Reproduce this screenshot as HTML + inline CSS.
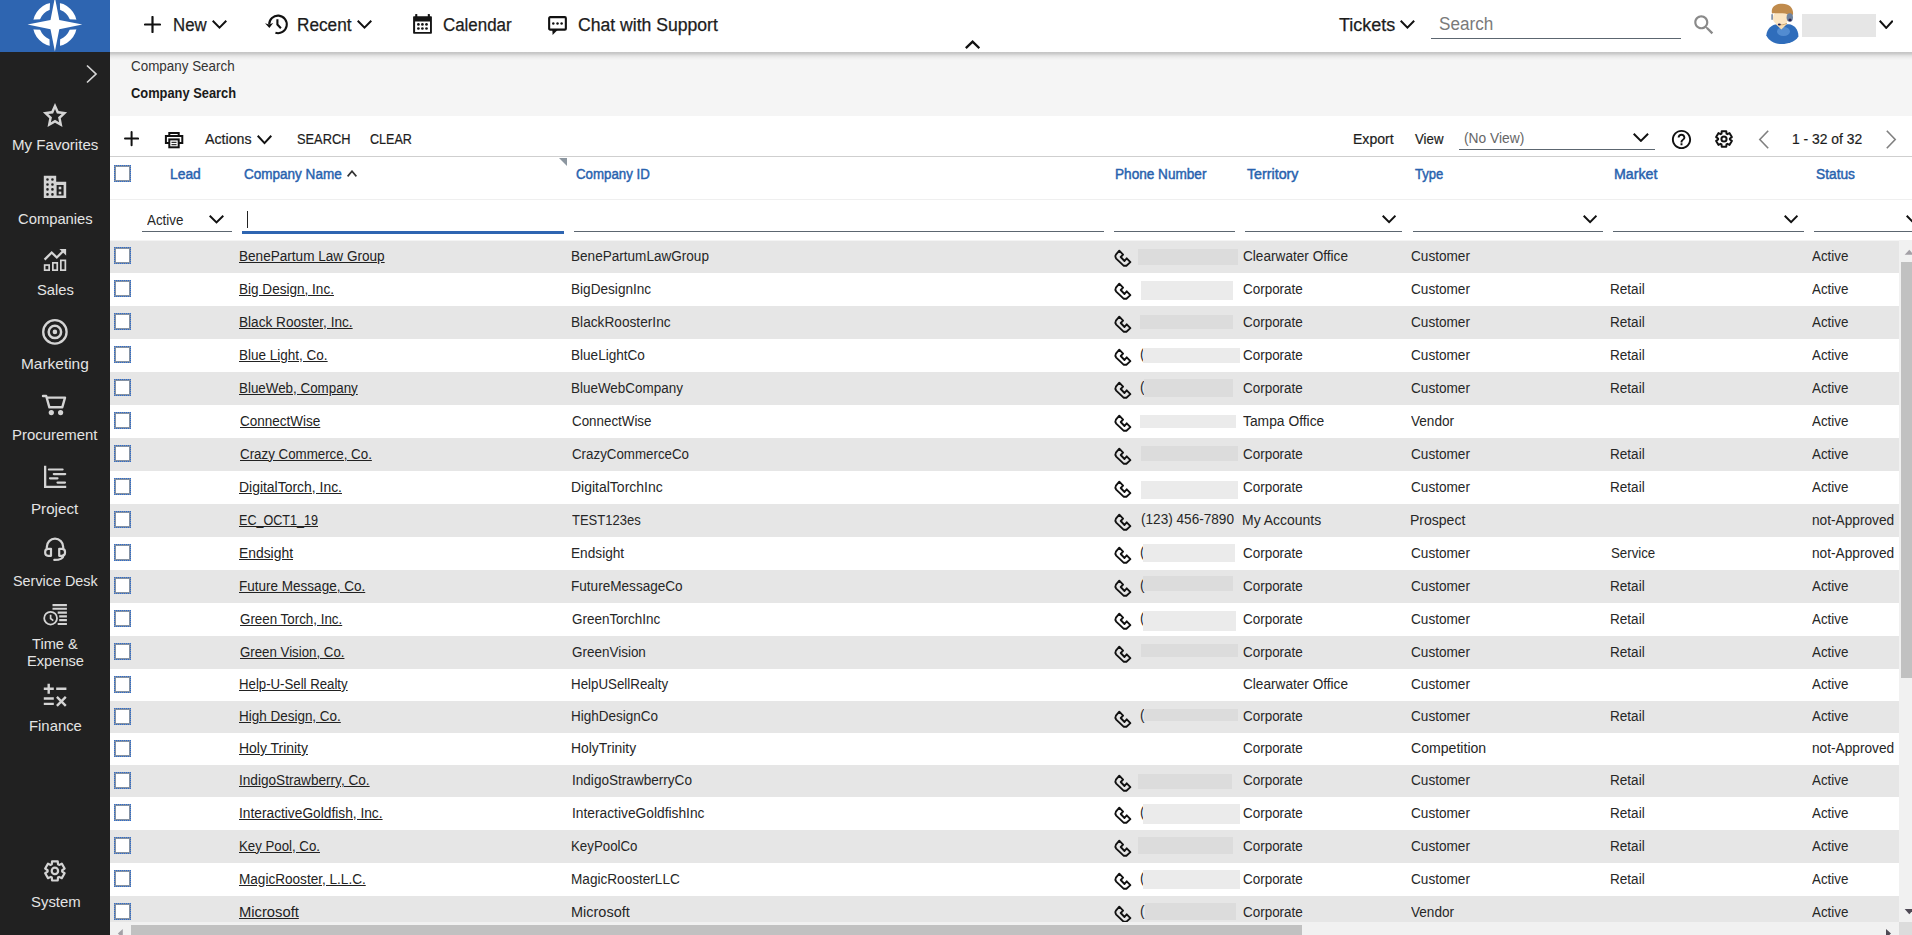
<!DOCTYPE html>
<html lang="en"><head><meta charset="utf-8"><title>Company Search</title>
<style>
*{box-sizing:border-box}
html,body{margin:0;padding:0}
body{width:1912px;height:935px;overflow:hidden;position:relative;background:#fff;font-family:"Liberation Sans",Arial,sans-serif;color:#1a1a1a;font-size:14px}
svg{display:block}
#side{position:absolute;left:0;top:0;width:110px;height:935px;background:#212121}
#logo{position:absolute;left:0;top:0;width:110px;height:52px;background:#2e65b1}
.nav{position:absolute;white-space:nowrap;color:#e4e4e4;font-size:15px;line-height:18px;transform-origin:0 50%}
.ni{position:absolute;left:41px;width:28px;height:28px}
#top{position:absolute;left:110px;top:0;width:1802px;height:52px;background:#fff;z-index:3}
#shad{position:absolute;left:110px;top:52px;width:1802px;height:8px;background:linear-gradient(rgba(0,0,0,.2),rgba(0,0,0,.17) 22%,rgba(0,0,0,.09) 42%,rgba(0,0,0,.04) 65%,rgba(0,0,0,0));z-index:3}
.tn{position:absolute;top:14px;font-size:18px;line-height:22px;color:#1c1c1c;white-space:nowrap;transform-origin:0 50%;-webkit-text-stroke:.25px #1c1c1c}
.ab{position:absolute}
#crumb{position:absolute;left:110px;top:52px;width:1802px;height:64px;background:#f5f5f5}
#crumb div{position:absolute;white-space:nowrap;line-height:18px;font-size:14px;transform-origin:0 50%}
#tb{position:absolute;left:110px;top:116px;width:1802px;height:40px;background:#fff}
.tt{position:absolute;top:14px;line-height:18px;font-size:14px;white-space:nowrap;transform-origin:0 50%;color:#1c1c1c;-webkit-text-stroke:.2px #1c1c1c}
#grid{position:absolute;left:110px;top:0;width:1802px;height:922px;overflow:hidden}
.hl{position:absolute;left:0;width:1802px;height:1px}
.th{position:absolute;top:165px;line-height:18px;font-size:14px;color:#2862ae;white-space:nowrap;transform-origin:0 50%;-webkit-text-stroke:.45px #2862ae}
.fu{position:absolute;top:231px;height:1px;background:#5c6670}
.fc{position:absolute;top:211px}
.row{position:absolute;left:0;width:1789px;background:#fff}
.row.g{background:#e6e6e6}
.c{position:absolute;top:50%;margin-top:-10px;line-height:18px;font-size:14px;white-space:nowrap;color:#262626;transform-origin:0 50%}
a.c{text-decoration:underline;color:#222}
.cb{position:absolute;left:4px;width:17px;height:17px;border:2px solid #8592a3;background:#fff;border-radius:1px}
.cb::after{content:"";box-sizing:border-box;position:absolute;left:-2px;top:-2px;width:17px;height:17px;border:1px dotted #2a6bd0;border-radius:1px}
.row .cb{top:7px}
.phw{position:absolute;left:1000px;top:50%;margin-top:-11.5px}
.rd{position:absolute;background:#ebebeb;display:block}
.row.g .rd{background:#dcdcdc}
</style></head><body>

<div id="side">
 <div id="logo">
  <svg class="ab" style="left:0;top:0" width="110" height="52" viewBox="0 0 110 52">
   <circle cx="54.900" cy="24.550" r="18.800" fill="none" stroke="#fff" stroke-width="6.400"/>
   <path d="M50.200 0 L49.700 52 H60.100 L59.600 0Z M30 19.850 L30 29.250 H80 V19.850Z" fill="#2e65b1"/><path d="M50.200 0 L48.900 24.500 L50.200 52 H59.600 L60.900 24.500 L59.600 0Z M30 20 L54 18.600 L80 20 V29.100 L54 30.500 L30 29.100Z" fill="#2e65b1"/>
   <path d="M54.900 -2.500 L59.300 19.900 L82.300 24.550 L59.300 29.200 L54.900 51.500 L50.500 29.200 L27.500 24.550 L50.500 19.900Z" fill="#fff"/>
  </svg>
 </div>
 <svg class="ab" style="left:79px;top:62px" width="24" height="24" viewBox="0 0 24 24"><path d="M8 3.500 L17 12 L8 20.500" fill="none" stroke="#d6d6d6" stroke-width="1.700"/></svg>
 <svg class="ni" style="top:101px" viewBox="-2 -2 28 28"><g transform="translate(12 13.28) scale(1 1.052)"><path d="M0.00 -12.72 L3.59 -4.94 L12.10 -3.93 L5.80 1.89 L7.48 10.29 L0.00 6.10 L-7.48 10.29 L-5.80 1.89 L-12.10 -3.93 L-3.59 -4.94Z M0.00 -7.00 L1.88 -2.59 L6.66 -2.16 L3.04 0.99 L4.11 5.66 L0.00 3.20 L-4.11 5.66 L-3.04 0.99 L-6.66 -2.16 L-1.88 -2.59Z" fill="#d4d4d4" fill-rule="evenodd"/></g></svg>
<svg class="ni" style="top:173px" viewBox="-2 -2 28 28"><path d="M0.800 0.800 H13.200 V6.800 H23.200 V23 H0.800Z M3.2 4.5a1.3 1.3 0 1 0 2.6 0a1.3 1.3 0 1 0 -2.6 0ZM3.2 9.45a1.3 1.3 0 1 0 2.6 0a1.3 1.3 0 1 0 -2.6 0ZM3.2 14.4a1.3 1.3 0 1 0 2.6 0a1.3 1.3 0 1 0 -2.6 0ZM3.2 19.4a1.3 1.3 0 1 0 2.6 0a1.3 1.3 0 1 0 -2.6 0ZM8.149999999999999 4.5a1.3 1.3 0 1 0 2.6 0a1.3 1.3 0 1 0 -2.6 0ZM8.149999999999999 9.45a1.3 1.3 0 1 0 2.6 0a1.3 1.3 0 1 0 -2.6 0ZM8.149999999999999 14.4a1.3 1.3 0 1 0 2.6 0a1.3 1.3 0 1 0 -2.6 0ZM8.149999999999999 19.4a1.3 1.3 0 1 0 2.6 0a1.3 1.3 0 1 0 -2.6 0Z M13.600 10.100 H20.600 V20.600 H13.600Z" fill="#d4d4d4" fill-rule="evenodd"/><rect x="15.700" y="11.700" width="2.600" height="2.600" fill="#d4d4d4"/><rect x="15.700" y="16.600" width="2.600" height="2.600" fill="#d4d4d4"/></svg>
<svg class="ni" style="top:246px" viewBox="-2 -2 28 28"><g fill="none" stroke="#d4d4d4" stroke-width="1.700"><rect x="1.650" y="17.050" width="4.500" height="5.100"/><rect x="9.850" y="14.850" width="4.400" height="7.300"/><rect x="17.850" y="12.350" width="4.500" height="9.800"/><path d="M1.600 11.600 L8.700 4.500 L13.800 9.500 L20.500 2.800" stroke-width="2.300"/></g><path d="M16.400 0.900 H23.100 V7.600Z" fill="#d4d4d4"/></svg>
<svg class="ni" style="top:318px" viewBox="-2 -2 28 28"><g fill="none" stroke="#d4d4d4"><circle cx="11.900" cy="11.900" r="11.700" stroke-width="2.300"/><circle cx="11.900" cy="11.900" r="6.200" stroke-width="2.500"/></g><circle cx="11.900" cy="11.900" r="2.300" fill="#d4d4d4"/></svg>
<svg class="ni" style="top:391px" viewBox="-2 -2 28 28"><g fill="none" stroke="#d4d4d4" stroke-width="2.400" stroke-linejoin="round" stroke-linecap="round"><path d="M0 3 H3.200 L6.400 14.300 H19.300 L22 4.600 H4.200"/></g><circle cx="8.300" cy="19.600" r="2.600" fill="#d4d4d4"/><circle cx="17.600" cy="19.600" r="2.600" fill="#d4d4d4"/></svg>
<svg class="ni" style="top:463px" viewBox="-2 -2 28 28"><g fill="none" stroke="#d4d4d4" stroke-width="2.300"><path d="M2.150 0.800 V21.950 H23.200"/><path d="M5.900 4.500 H19.600 M10.800 9.100 H22.200 M7 13.300 H14.500 M14.500 17.600 H22" stroke-linecap="round" stroke-width="2.200"/></g></svg>
<svg class="ni" style="top:535px" viewBox="-2 -2 28 28"><g fill="none" stroke="#d4d4d4" stroke-width="2.200"><path d="M3.800 11.500 V9.900 a8.200 8.200 0 0 1 16.400 0 V11.500"/><path d="M8 11.800 H5.200 a3 3 0 0 0 -3 3 v1 a3 3 0 0 0 3 3 H8Z" stroke-linejoin="round"/><path d="M16.200 11.800 H19 a3 3 0 0 1 3 3 v1 a3 3 0 0 1 -3 3 H16.200Z" stroke-linejoin="round"/><path d="M20.500 18.200 C20.300 21.500 17.500 22.900 11.300 22.900" stroke-linecap="round"/></g></svg>
<svg class="ni" style="top:602px" viewBox="-2 -2 28 28"><g fill="none" stroke="#d4d4d4"><circle cx="7.600" cy="14.200" r="6.400" stroke-width="1.800"/><path d="M7.600 10.800 V14.500 L10.300 16.700" stroke-width="1.700"/><path d="M9.500 1.100 H23.900 M9.500 4.750 H23.900 M14.700 8.600 H23.900 M16.200 12.400 H23.900 M16.200 16.200 H23.900 M14.700 20 H23.900" stroke-width="2.200"/></g></svg>
<svg class="ni" style="top:681px" viewBox="-2 -2 28 28"><g fill="none" stroke="#d4d4d4" stroke-width="2.400"><path d="M0.800 5.700 H10.800 M5.700 0.800 V10.800 M13.200 5.700 H23.400 M0.800 15.500 H10.800 M0.800 20.900 H10.800 M13.900 13.900 L22.800 22.800 M22.800 13.900 L13.900 22.800"/></g></svg>
<svg class="ni" style="top:857px" viewBox="-2 -2 28 28"><path d="M8.81 5.28 L9.06 2.31 L14.74 2.31 L14.99 5.28 L16.09 5.92 L18.78 4.65 L21.62 9.57 L19.17 11.26 L19.17 12.54 L21.62 14.23 L18.78 19.15 L16.09 17.88 L14.99 18.52 L14.74 21.49 L9.06 21.49 L8.81 18.52 L7.71 17.88 L5.02 19.15 L2.18 14.23 L4.63 12.54 L4.63 11.26 L2.18 9.57 L5.02 4.65 L7.71 5.92Z" fill="none" stroke="#d4d4d4" stroke-width="2.2" stroke-linejoin="round"/><circle cx="11.9" cy="11.9" r="3.2" fill="none" stroke="#d4d4d4" stroke-width="2.2"/></svg>
<div class="nav" style="left:11.59px;transform:scaleX(1.0054);top:136.3px">My Favorites</div>
<div class="nav" style="left:18.00px;transform:scaleX(0.9845);top:209.6px">Companies</div>
<div class="nav" style="left:36.90px;transform:scaleX(0.9832);top:281.3px">Sales</div>
<div class="nav" style="left:20.87px;transform:scaleX(1.0292);top:354.6px">Marketing</div>
<div class="nav" style="left:11.60px;transform:scaleX(0.9953);top:426.3px">Procurement</div>
<div class="nav" style="left:30.89px;transform:scaleX(1.0104);top:499.6px">Project</div>
<div class="nav" style="left:12.70px;transform:scaleX(0.9588);top:571.7px">Service Desk</div>
<div class="nav" style="left:32.40px;transform:scaleX(0.9756);top:634.6px">Time &amp;</div>
<div class="nav" style="left:26.62px;transform:scaleX(0.9766);top:652.2px">Expense</div>
<div class="nav" style="left:28.61px;transform:scaleX(0.99);top:716.9px">Finance</div>
<div class="nav" style="left:30.80px;transform:scaleX(0.9936);top:892.7px">System</div>

</div>

<div id="top">
 <svg class="ab" style="left:34.0px;top:16.0px" width="17.0" height="17.0" viewBox="0 0 17.0 17.0"><path d="M1 8.5 H16.0 M8.5 1 V16.0" fill="none" stroke="#111" stroke-width="2.2" stroke-linecap="round"/></svg><div class="tn" style="left:62.57px;transform:scaleX(0.9331);">New</div><svg class="ab" style="left:102px;top:20px" width="15" height="9" viewBox="0 0 15 9"><path d="M0.72 0.72 L7.50 7.58 L14.28 0.72" fill="none" stroke="#111" stroke-width="2.0"/></svg><svg class="ab" style="left:154px;top:12px" width="26" height="26" viewBox="0 0 26 26"><g fill="none" stroke="#111" stroke-width="2.100"><path d="M5.200 12.600 A8.800 8.800 0 1 1 11.430 20.820"/><path d="M13.400 7.300 V12.500 L16.900 16.200"/></g><path d="M1 11.200 L5 12.400 L9.200 11.100 L5.400 16.100Z" fill="#111"/></svg><div class="tn" style="left:187.24px;transform:scaleX(0.9566);">Recent</div><svg class="ab" style="left:247px;top:20px" width="15" height="9" viewBox="0 0 15 9"><path d="M0.72 0.72 L7.50 7.58 L14.28 0.72" fill="none" stroke="#111" stroke-width="2.0"/></svg><svg class="ab" style="left:301px;top:12px" width="24" height="24" viewBox="0 0 24 24" fill="#151515"><path d="M2.900 4.200 H20.100 a.8 .8 0 0 1 .8 .8 V21 a.8 .8 0 0 1 -.8 .8 H2.900 a.8 .8 0 0 1 -.8 -.8 V5 a.8 .8 0 0 1 .8 -.8Z M4.100 9.500 V19.900 H19 V9.500Z" fill-rule="evenodd"/><rect x="4.200" y="2" width="2.100" height="3.500" rx=".6"/><rect x="16.800" y="2" width="2.100" height="3.500" rx=".6"/><circle cx="7.4" cy="12.4" r="1.350"/><circle cx="7.4" cy="16.5" r="1.350"/><circle cx="11.4" cy="12.4" r="1.350"/><circle cx="11.4" cy="16.5" r="1.350"/><circle cx="15.5" cy="12.4" r="1.350"/><circle cx="15.5" cy="16.5" r="1.350"/></svg><div class="tn" style="left:333.20px;transform:scaleX(0.9391);">Calendar</div><svg class="ab" style="left:436px;top:14px" width="24" height="24" viewBox="0 0 24 24"><rect x="3.150" y="3.150" width="16.700" height="12.500" rx="1" fill="none" stroke="#111" stroke-width="2.100"/><path d="M6.300 15.200 L6.600 20.900 L12.300 15.200Z" fill="#111"/><circle cx="7.300" cy="9.500" r="1.250" fill="#111"/><circle cx="11.500" cy="9.500" r="1.250" fill="#111"/><circle cx="15.600" cy="9.500" r="1.250" fill="#111"/></svg><div class="tn" style="left:467.70px;transform:scaleX(0.9771);">Chat with Support</div><svg class="ab" style="left:855px;top:40px" width="15.200000000000045" height="9" viewBox="0 0 15.200000000000045 9"><path d="M0.83 8.17 L7.60 1.63 L14.37 8.17" fill="none" stroke="#111" stroke-width="2.3"/></svg><div class="tn" style="left:1229.00px;transform:scaleX(0.9976);">Tickets</div><svg class="ab" style="left:1290.3px;top:20px" width="14.900000000000091" height="9" viewBox="0 0 14.900000000000091 9"><path d="M0.72 0.72 L7.45 7.58 L14.18 0.72" fill="none" stroke="#111" stroke-width="2.0"/></svg><div class="tn" style="left:1328.70px;transform:scaleX(0.9514);color:#7a7a7a;-webkit-text-stroke:0;top:13px">Search</div><div class="ab" style="left:1321px;top:38px;width:250px;height:1px;background:#5c6670"></div><svg class="ab" style="left:1580.8px;top:11.5px" width="26" height="26" viewBox="0 0 24 24" fill="#8a8a8a"><path d="M15.500 14h-.790l-.280-.270C15.410 12.590 16 11.110 16 9.500 16 5.910 13.090 3 9.500 3S3 5.910 3 9.500 5.910 16 9.500 16c1.610 0 3.090-.590 4.230-1.570l.270.280v.790l5 4.990L20.490 19l-4.990-5zm-6 0C7.010 14 5 11.990 5 9.500S7.010 5 9.500 5 14 7.010 14 9.500 11.990 14 9.500 14z"/></svg><svg class="ab" style="left:1654px;top:0" width="36" height="46" viewBox="0 0 36 46">
<path d="M2.300 35.500 C2.800 28.500 8.500 24.300 13 24.300 L25 24.300 C29.500 24.300 34.600 29.500 34.400 36.500 C31 42 24 44 17.800 44 C11 44 5 41.200 2.300 35.500Z" fill="#2f6dbb"/>
<ellipse cx="19.500" cy="31.500" rx="6.500" ry="4.500" fill="#5f97d8" opacity=".75"/>
<path d="M11.800 24.200 L17.300 29.600 L22.800 24.200 L22 21 H13Z" fill="#f7dcb2"/>
<ellipse cx="16.600" cy="18" rx="7.800" ry="7" fill="#fbe5c3"/>
<path d="M8 13.400 C6.500 6.500 12.500 3.500 18.500 3.700 C25.500 3.900 29.800 8 29 14.500 L26 17 C25 14 22 13 17.500 13.200 C13 13.400 10 13 8 13.400Z" fill="#c08b4c"/>
<ellipse cx="25.800" cy="17.400" rx="3.200" ry="4.200" fill="#7084a0"/>
<circle cx="26" cy="20" r="1.600" fill="#2c2552"/>
<rect x="7.300" y="14" width="1.600" height="6" rx=".8" fill="#7a8aa3"/>
<path d="M23 23.300 C20 25 17 25 14.500 24.500" fill="none" stroke="#c49a62" stroke-width=".8"/>
<ellipse cx="15.300" cy="24.500" rx="1.500" ry=".9" fill="#2c2552"/>
</svg><div class="ab" style="left:1692px;top:14px;width:74px;height:23px;background:#e6e6e6"></div><svg class="ab" style="left:1768.5px;top:20px" width="14.5" height="9.3" viewBox="0 0 14.5 9.3"><path d="M0.72 0.72 L7.25 7.88 L13.78 0.72" fill="none" stroke="#111" stroke-width="2.0"/></svg>
</div>

<div id="shad"></div>
<div id="crumb">
 <div class="" style="left:20.50px;transform:scaleX(0.9583);top:5px;color:#333">Company Search</div><div class="" style="left:20.50px;transform:scaleX(0.919);top:32px;font-weight:bold;color:#1a1a1a">Company Search</div>
</div>

<div id="tb">
 <svg class="ab" style="left:13.800000000000006px;top:15.4px" width="15.2" height="15.2" viewBox="0 0 15.2 15.2"><path d="M1 7.6 H14.2 M7.6 1 V14.2" fill="none" stroke="#111" stroke-width="2.0" stroke-linecap="round"/></svg><svg class="ab" style="left:54px;top:15px" width="21" height="19" viewBox="0 0 21 19"><g fill="none" stroke="#111" stroke-width="2"><path d="M5.300 5 V1.900 H14.700 V5"/><path d="M5.300 12 H1.900 V5.100 H18.300 V12 H14.700"/><rect x="5.300" y="8.400" width="9.400" height="7.900" fill="#fff"/><path d="M7.500 11.300 H12.500 M7.500 13.700 H12.500" stroke-width="1.200" stroke="#333"/></g></svg><div class="tt" style="left:95.40px;transform:scaleX(1.0128);">Actions</div><svg class="ab" style="left:147px;top:19.30000000000001px" width="15" height="9.5" viewBox="0 0 15 9.5"><path d="M0.72 0.72 L7.50 8.08 L14.28 0.72" fill="none" stroke="#111" stroke-width="2.0"/></svg><div class="tt" style="left:187.40px;transform:scaleX(0.9155);">SEARCH</div><div class="tt" style="left:260.20px;transform:scaleX(0.8975);">CLEAR</div><div class="tt" style="left:1243.20px;transform:scaleX(1.0032);">Export</div><div class="tt" style="left:1304.50px;transform:scaleX(0.9457);">View</div><div class="tt" style="left:1354.20px;transform:scaleX(0.9845);top:13px;color:#666;-webkit-text-stroke:0">(No View)</div><div class="ab" style="left:1349px;top:33px;width:196px;height:1px;background:#5c6670"></div><svg class="ab" style="left:1522.8px;top:17.099999999999994px" width="15.799999999999955" height="9.300000000000011" viewBox="0 0 15.799999999999955 9.300000000000011"><path d="M0.72 0.72 L7.90 7.88 L15.08 0.72" fill="none" stroke="#111" stroke-width="2.0"/></svg><svg class="ab" style="left:1560px;top:12px" width="23" height="23" viewBox="0 0 24 24" fill="#111"><path d="M11 18h2v-2h-2v2zm1-16C6.480 2 2 6.480 2 12s4.480 10 10 10 10-4.480 10-10S17.520 2 12 2zm0 18c-4.410 0-8-3.590-8-8s3.590-8 8-8 8 3.590 8 8-3.590 8-8 8zm0-14c-2.210 0-4 1.790-4 4h2c0-1.100.900-2 2-2s2 .900 2 2c0 2-3 1.750-3 5h2c0-2.250 3-2.500 3-5 0-2.210-1.790-4-4-4z"/></svg><svg class="ab" style="left:1603.5px;top:13.199999999999989px" width="20" height="20" viewBox="0 0 24 24"><path d="M9.00 5.57 L9.25 2.70 L14.75 2.70 L15.00 5.57 L16.07 6.18 L18.68 4.96 L21.43 9.74 L19.07 11.38 L19.07 12.62 L21.43 14.26 L18.68 19.04 L16.07 17.82 L15.00 18.43 L14.75 21.30 L9.25 21.30 L9.00 18.43 L7.93 17.82 L5.32 19.04 L2.57 14.26 L4.93 12.62 L4.93 11.38 L2.57 9.74 L5.32 4.96 L7.93 6.18Z" fill="none" stroke="#111" stroke-width="2.4" stroke-linejoin="round"/><circle cx="12" cy="12" r="3.1" fill="none" stroke="#111" stroke-width="2.4"/></svg><svg class="ab" style="left:1648px;top:14px" width="12" height="19" viewBox="0 0 12 19"><path d="M10.200 0.700 L1.800 9.500 L10.200 18.300" fill="none" stroke="#808080" stroke-width="1.600"/></svg><div class="tt" style="left:1681.71px;transform:scaleX(0.9908);">1 - 32 of 32</div><svg class="ab" style="left:1774.5px;top:14px" width="12" height="19" viewBox="0 0 12 19"><path d="M1.800 0.700 L10.200 9.500 L1.800 18.300" fill="none" stroke="#808080" stroke-width="1.600"/></svg>
</div>

<div id="grid">
 <div class="hl" style="top:156px;background:#cfcfcf"></div>
 <div class="hl" style="top:199px;background:#efefef"></div>
 <i class="cb" style="top:165px"></i><div class="th" style="left:60.41px;transform:scaleX(0.9878);">Lead</div><div class="th" style="left:133.90px;transform:scaleX(0.9658);">Company Name</div><div class="th" style="left:466.10px;transform:scaleX(0.9473);">Company ID</div><div class="th" style="left:1005.13px;transform:scaleX(0.9711);">Phone Number</div><div class="th" style="left:1136.90px;transform:scaleX(1.0166);">Territory</div><div class="th" style="left:1305.30px;transform:scaleX(0.9324);">Type</div><div class="th" style="left:1503.99px;transform:scaleX(1.0144);">Market</div><div class="th" style="left:1705.90px;transform:scaleX(0.9826);">Status</div><svg class="ab" style="left:236.7px;top:170px" width="10.0" height="7" viewBox="0 0 10.0 7"><path d="M0.61 6.39 L5.00 1.21 L9.39 6.39" fill="none" stroke="#333" stroke-width="1.7"/></svg><svg class="ab" style="left:449px;top:158px" width="8" height="8" viewBox="0 0 8 8"><path d="M0 0 H8 V8Z" fill="#8c96a0"/></svg><div class="c" style="left:37.20px;transform:scaleX(0.9547);top:221px">Active</div><svg class="ab" style="left:99.19999999999999px;top:215.2px" width="15.0" height="8.800000000000011" viewBox="0 0 15.0 8.800000000000011"><path d="M0.72 0.72 L7.50 7.38 L14.28 0.72" fill="none" stroke="#111" stroke-width="2.0"/></svg><div class="fu" style="left:32px;width:90px"></div><div class="ab" style="left:132px;top:230.500px;width:322px;height:3px;background:#2e65b1"></div><div class="ab" style="left:137px;top:211px;width:1px;height:17px;background:#222"></div><div class="fu" style="left:464px;width:530px"></div><div class="fu" style="left:1004px;width:121px"></div><div class="fu" style="left:1135px;width:157px"></div><svg class="ab" style="left:1271.5px;top:215.1px" width="14.200000000000045" height="8.599999999999994" viewBox="0 0 14.200000000000045 8.599999999999994"><path d="M0.72 0.72 L7.10 7.18 L13.48 0.72" fill="none" stroke="#111" stroke-width="2.0"/></svg><div class="fu" style="left:1303px;width:190px"></div><svg class="ab" style="left:1472.5px;top:215.1px" width="14.200000000000045" height="8.599999999999994" viewBox="0 0 14.200000000000045 8.599999999999994"><path d="M0.72 0.72 L7.10 7.18 L13.48 0.72" fill="none" stroke="#111" stroke-width="2.0"/></svg><div class="fu" style="left:1503px;width:191px"></div><svg class="ab" style="left:1673.5px;top:215.1px" width="14.200000000000045" height="8.599999999999994" viewBox="0 0 14.200000000000045 8.599999999999994"><path d="M0.72 0.72 L7.10 7.18 L13.48 0.72" fill="none" stroke="#111" stroke-width="2.0"/></svg><div class="fu" style="left:1704px;width:112px"></div><svg class="ab" style="left:1795.5px;top:215.1px" width="14.200000000000045" height="8.599999999999994" viewBox="0 0 14.200000000000045 8.599999999999994"><path d="M0.72 0.72 L7.10 7.18 L13.48 0.72" fill="none" stroke="#111" stroke-width="2.0"/></svg>
<div class="row g" style="top:240px;height:33px"><i class="cb"></i><a class="c" style="left:128.63px;transform:scaleX(0.9698);">BenePartum Law Group</a><span class="c" style="left:461.33px;transform:scaleX(0.9687);">BenePartumLawGroup</span><span class="phw"><svg class="ph" viewBox="0 0 26 26" width="26" height="26"><path d="M9.300 5.700 L13.100 9.600 L10.700 12 L14.500 16 L16.700 13.300 L20.400 17.100 L16.400 20.700 H13.600 L6.200 13.600 Q4.700 11.500 5.900 9.700Z" fill="none" stroke="#111" stroke-width="1.850" stroke-linejoin="round"/></svg></span><b class="rd" style="left:1028.0px;width:99.8px;top:8.7px;height:16.1px"></b><span class="c" style="left:1133.00px;transform:scaleX(0.9731);">Clearwater Office</span><span class="c" style="left:1300.90px;transform:scaleX(0.9718);">Customer</span><span class="c" style="left:1702.40px;transform:scaleX(0.9547);">Active</span></div>
<div class="row" style="top:273px;height:33px"><i class="cb"></i><a class="c" style="left:128.63px;transform:scaleX(0.9682);">Big Design, Inc.</a><span class="c" style="left:461.33px;transform:scaleX(0.9719);">BigDesignInc</span><span class="phw"><svg class="ph" viewBox="0 0 26 26" width="26" height="26"><path d="M9.300 5.700 L13.100 9.600 L10.700 12 L14.500 16 L16.700 13.300 L20.400 17.100 L16.400 20.700 H13.600 L6.200 13.600 Q4.700 11.500 5.900 9.700Z" fill="none" stroke="#111" stroke-width="1.850" stroke-linejoin="round"/></svg></span><b class="rd" style="left:1031.0px;width:92.0px;top:8.0px;height:19.0px"></b><span class="c" style="left:1133.00px;transform:scaleX(0.9605);">Corporate</span><span class="c" style="left:1300.90px;transform:scaleX(0.9718);">Customer</span><span class="c" style="left:1499.93px;transform:scaleX(0.9688);">Retail</span><span class="c" style="left:1702.40px;transform:scaleX(0.9547);">Active</span></div>
<div class="row g" style="top:306px;height:33px"><i class="cb"></i><a class="c" style="left:128.63px;transform:scaleX(0.9736);">Black Rooster, Inc.</a><span class="c" style="left:461.32px;transform:scaleX(0.9769);">BlackRoosterInc</span><span class="phw"><svg class="ph" viewBox="0 0 26 26" width="26" height="26"><path d="M9.300 5.700 L13.100 9.600 L10.700 12 L14.500 16 L16.700 13.300 L20.400 17.100 L16.400 20.700 H13.600 L6.200 13.600 Q4.700 11.500 5.900 9.700Z" fill="none" stroke="#111" stroke-width="1.850" stroke-linejoin="round"/></svg></span><b class="rd" style="left:1029.7px;width:93.3px;top:9.0px;height:13.8px"></b><span class="c" style="left:1133.00px;transform:scaleX(0.9605);">Corporate</span><span class="c" style="left:1300.90px;transform:scaleX(0.9718);">Customer</span><span class="c" style="left:1499.93px;transform:scaleX(0.9688);">Retail</span><span class="c" style="left:1702.40px;transform:scaleX(0.9547);">Active</span></div>
<div class="row" style="top:339px;height:33px"><i class="cb"></i><a class="c" style="left:128.63px;transform:scaleX(0.965);">Blue Light, Co.</a><span class="c" style="left:461.33px;transform:scaleX(0.9683);">BlueLightCo</span><span class="phw"><svg class="ph" viewBox="0 0 26 26" width="26" height="26"><path d="M9.300 5.700 L13.100 9.600 L10.700 12 L14.500 16 L16.700 13.300 L20.400 17.100 L16.400 20.700 H13.600 L6.200 13.600 Q4.700 11.500 5.900 9.700Z" fill="none" stroke="#111" stroke-width="1.850" stroke-linejoin="round"/></svg></span><span class="c" style="left:1030.3px;margin-top:-11px;transform:scaleX(.97)">(</span><b class="rd" style="left:1032.7px;width:97.0px;top:9.0px;height:14.8px"></b><span class="c" style="left:1133.00px;transform:scaleX(0.9605);">Corporate</span><span class="c" style="left:1300.90px;transform:scaleX(0.9718);">Customer</span><span class="c" style="left:1499.93px;transform:scaleX(0.9688);">Retail</span><span class="c" style="left:1702.40px;transform:scaleX(0.9547);">Active</span></div>
<div class="row g" style="top:372px;height:33px"><i class="cb"></i><a class="c" style="left:128.64px;transform:scaleX(0.9558);">BlueWeb, Company</a><span class="c" style="left:461.34px;transform:scaleX(0.9604);">BlueWebCompany</span><span class="phw"><svg class="ph" viewBox="0 0 26 26" width="26" height="26"><path d="M9.300 5.700 L13.100 9.600 L10.700 12 L14.500 16 L16.700 13.300 L20.400 17.100 L16.400 20.700 H13.600 L6.200 13.600 Q4.700 11.500 5.900 9.700Z" fill="none" stroke="#111" stroke-width="1.850" stroke-linejoin="round"/></svg></span><span class="c" style="left:1030.3px;margin-top:-11px;transform:scaleX(.97)">(</span><b class="rd" style="left:1034.2px;width:88.8px;top:7.0px;height:17.8px"></b><span class="c" style="left:1133.00px;transform:scaleX(0.9605);">Corporate</span><span class="c" style="left:1300.90px;transform:scaleX(0.9718);">Customer</span><span class="c" style="left:1499.93px;transform:scaleX(0.9688);">Retail</span><span class="c" style="left:1702.40px;transform:scaleX(0.9547);">Active</span></div>
<div class="row" style="top:405px;height:33px"><i class="cb"></i><a class="c" style="left:129.60px;transform:scaleX(0.9644);">ConnectWise</a><span class="c" style="left:462.30px;transform:scaleX(0.9548);">ConnectWise</span><span class="phw"><svg class="ph" viewBox="0 0 26 26" width="26" height="26"><path d="M9.300 5.700 L13.100 9.600 L10.700 12 L14.500 16 L16.700 13.300 L20.400 17.100 L16.400 20.700 H13.600 L6.200 13.600 Q4.700 11.500 5.900 9.700Z" fill="none" stroke="#111" stroke-width="1.850" stroke-linejoin="round"/></svg></span><b class="rd" style="left:1030.0px;width:95.8px;top:10.0px;height:12.8px"></b><span class="c" style="left:1132.80px;transform:scaleX(0.9886);">Tampa Office</span><span class="c" style="left:1300.70px;transform:scaleX(0.9707);">Vendor</span><span class="c" style="left:1702.40px;transform:scaleX(0.9547);">Active</span></div>
<div class="row g" style="top:438px;height:33px"><i class="cb"></i><a class="c" style="left:129.60px;transform:scaleX(0.9522);">Crazy Commerce, Co.</a><span class="c" style="left:462.30px;transform:scaleX(0.9519);">CrazyCommerceCo</span><span class="phw"><svg class="ph" viewBox="0 0 26 26" width="26" height="26"><path d="M9.300 5.700 L13.100 9.600 L10.700 12 L14.500 16 L16.700 13.300 L20.400 17.100 L16.400 20.700 H13.600 L6.200 13.600 Q4.700 11.500 5.900 9.700Z" fill="none" stroke="#111" stroke-width="1.850" stroke-linejoin="round"/></svg></span><b class="rd" style="left:1031.0px;width:96.8px;top:8.0px;height:14.8px"></b><span class="c" style="left:1133.00px;transform:scaleX(0.9605);">Corporate</span><span class="c" style="left:1300.90px;transform:scaleX(0.9718);">Customer</span><span class="c" style="left:1499.93px;transform:scaleX(0.9688);">Retail</span><span class="c" style="left:1702.40px;transform:scaleX(0.9547);">Active</span></div>
<div class="row" style="top:471px;height:33px"><i class="cb"></i><a class="c" style="left:128.60px;transform:scaleX(0.9951);">DigitalTorch, Inc.</a><span class="c" style="left:461.30px;transform:scaleX(0.9988);">DigitalTorchInc</span><span class="phw"><svg class="ph" viewBox="0 0 26 26" width="26" height="26"><path d="M9.300 5.700 L13.100 9.600 L10.700 12 L14.500 16 L16.700 13.300 L20.400 17.100 L16.400 20.700 H13.600 L6.200 13.600 Q4.700 11.500 5.900 9.700Z" fill="none" stroke="#111" stroke-width="1.850" stroke-linejoin="round"/></svg></span><b class="rd" style="left:1031.0px;width:96.8px;top:10.0px;height:17.8px"></b><span class="c" style="left:1133.00px;transform:scaleX(0.9605);">Corporate</span><span class="c" style="left:1300.90px;transform:scaleX(0.9718);">Customer</span><span class="c" style="left:1499.93px;transform:scaleX(0.9688);">Retail</span><span class="c" style="left:1702.40px;transform:scaleX(0.9547);">Active</span></div>
<div class="row g" style="top:504px;height:33px"><i class="cb"></i><a class="c" style="left:128.70px;transform:scaleX(0.8985);">EC_OCT1_19</a><span class="c" style="left:462.30px;transform:scaleX(0.9293);">TEST123es</span><span class="phw"><svg class="ph" viewBox="0 0 26 26" width="26" height="26"><path d="M9.300 5.700 L13.100 9.600 L10.700 12 L14.500 16 L16.700 13.300 L20.400 17.100 L16.400 20.700 H13.600 L6.200 13.600 Q4.700 11.500 5.900 9.700Z" fill="none" stroke="#111" stroke-width="1.850" stroke-linejoin="round"/></svg></span><span class="c" style="left:1030.80px;transform:scaleX(0.9713);margin-top:-11px">(123) 456-7890</span><span class="c" style="left:1132.00px;transform:scaleX(0.997);">My Accounts</span><span class="c" style="left:1299.90px;transform:scaleX(1.0008);">Prospect</span><span class="c" style="left:1701.90px;transform:scaleX(0.9776);">not-Approved</span></div>
<div class="row" style="top:537px;height:33px"><i class="cb"></i><a class="c" style="left:128.61px;transform:scaleX(0.9908);">Endsight</a><span class="c" style="left:461.32px;transform:scaleX(0.9759);">Endsight</span><span class="phw"><svg class="ph" viewBox="0 0 26 26" width="26" height="26"><path d="M9.300 5.700 L13.100 9.600 L10.700 12 L14.500 16 L16.700 13.300 L20.400 17.100 L16.400 20.700 H13.600 L6.200 13.600 Q4.700 11.500 5.900 9.700Z" fill="none" stroke="#111" stroke-width="1.850" stroke-linejoin="round"/></svg></span><span class="c" style="left:1030.3px;margin-top:-11px;transform:scaleX(.97)">(</span><b class="rd" style="left:1032.7px;width:92.3px;top:7.2px;height:18.1px"></b><span class="c" style="left:1133.00px;transform:scaleX(0.9605);">Corporate</span><span class="c" style="left:1300.90px;transform:scaleX(0.9718);">Customer</span><span class="c" style="left:1500.80px;transform:scaleX(0.9468);">Service</span><span class="c" style="left:1701.90px;transform:scaleX(0.9776);">not-Approved</span></div>
<div class="row g" style="top:570px;height:33px"><i class="cb"></i><a class="c" style="left:128.63px;transform:scaleX(0.9656);">Future Message, Co.</a><span class="c" style="left:461.33px;transform:scaleX(0.9696);">FutureMessageCo</span><span class="phw"><svg class="ph" viewBox="0 0 26 26" width="26" height="26"><path d="M9.300 5.700 L13.100 9.600 L10.700 12 L14.500 16 L16.700 13.300 L20.400 17.100 L16.400 20.700 H13.600 L6.200 13.600 Q4.700 11.500 5.900 9.700Z" fill="none" stroke="#111" stroke-width="1.850" stroke-linejoin="round"/></svg></span><span class="c" style="left:1030.3px;margin-top:-11px;transform:scaleX(.97)">(</span><b class="rd" style="left:1032.7px;width:90.3px;top:6.0px;height:14.6px"></b><span class="c" style="left:1133.00px;transform:scaleX(0.9605);">Corporate</span><span class="c" style="left:1300.90px;transform:scaleX(0.9718);">Customer</span><span class="c" style="left:1499.93px;transform:scaleX(0.9688);">Retail</span><span class="c" style="left:1702.40px;transform:scaleX(0.9547);">Active</span></div>
<div class="row" style="top:603px;height:33px"><i class="cb"></i><a class="c" style="left:129.60px;transform:scaleX(0.9541);">Green Torch, Inc.</a><span class="c" style="left:462.30px;transform:scaleX(0.9606);">GreenTorchInc</span><span class="phw"><svg class="ph" viewBox="0 0 26 26" width="26" height="26"><path d="M9.300 5.700 L13.100 9.600 L10.700 12 L14.500 16 L16.700 13.300 L20.400 17.100 L16.400 20.700 H13.600 L6.200 13.600 Q4.700 11.500 5.900 9.700Z" fill="none" stroke="#111" stroke-width="1.850" stroke-linejoin="round"/></svg></span><span class="c" style="left:1030.3px;margin-top:-11px;transform:scaleX(.97)">(</span><b class="rd" style="left:1032.7px;width:93.1px;top:8.2px;height:20.3px"></b><span class="c" style="left:1133.00px;transform:scaleX(0.9605);">Corporate</span><span class="c" style="left:1300.90px;transform:scaleX(0.9718);">Customer</span><span class="c" style="left:1499.93px;transform:scaleX(0.9688);">Retail</span><span class="c" style="left:1702.40px;transform:scaleX(0.9547);">Active</span></div>
<div class="row g" style="top:636px;height:33px"><i class="cb"></i><a class="c" style="left:129.60px;transform:scaleX(0.9474);">Green Vision, Co.</a><span class="c" style="left:462.30px;transform:scaleX(0.9618);">GreenVision</span><span class="phw"><svg class="ph" viewBox="0 0 26 26" width="26" height="26"><path d="M9.300 5.700 L13.100 9.600 L10.700 12 L14.500 16 L16.700 13.300 L20.400 17.100 L16.400 20.700 H13.600 L6.200 13.600 Q4.700 11.500 5.900 9.700Z" fill="none" stroke="#111" stroke-width="1.850" stroke-linejoin="round"/></svg></span><b class="rd" style="left:1031.0px;width:96.8px;top:8.2px;height:12.9px"></b><span class="c" style="left:1133.00px;transform:scaleX(0.9605);">Corporate</span><span class="c" style="left:1300.90px;transform:scaleX(0.9718);">Customer</span><span class="c" style="left:1499.93px;transform:scaleX(0.9688);">Retail</span><span class="c" style="left:1702.40px;transform:scaleX(0.9547);">Active</span></div>
<div class="row" style="top:669px;height:32px"><i class="cb"></i><a class="c" style="left:128.66px;transform:scaleX(0.9435);">Help-U-Sell Realty</a><span class="c" style="left:461.35px;transform:scaleX(0.9521);">HelpUSellRealty</span><span class="c" style="left:1133.00px;transform:scaleX(0.9731);">Clearwater Office</span><span class="c" style="left:1300.90px;transform:scaleX(0.9718);">Customer</span><span class="c" style="left:1702.40px;transform:scaleX(0.9547);">Active</span></div>
<div class="row g" style="top:701px;height:32px"><i class="cb"></i><a class="c" style="left:128.64px;transform:scaleX(0.9621);">High Design, Co.</a><span class="c" style="left:461.34px;transform:scaleX(0.9644);">HighDesignCo</span><span class="phw"><svg class="ph" viewBox="0 0 26 26" width="26" height="26"><path d="M9.300 5.700 L13.100 9.600 L10.700 12 L14.500 16 L16.700 13.300 L20.400 17.100 L16.400 20.700 H13.600 L6.200 13.600 Q4.700 11.500 5.900 9.700Z" fill="none" stroke="#111" stroke-width="1.850" stroke-linejoin="round"/></svg></span><span class="c" style="left:1030.3px;margin-top:-11px;transform:scaleX(.97)">(</span><b class="rd" style="left:1034.2px;width:93.6px;top:8.4px;height:11.6px"></b><span class="c" style="left:1133.00px;transform:scaleX(0.9605);">Corporate</span><span class="c" style="left:1300.90px;transform:scaleX(0.9718);">Customer</span><span class="c" style="left:1499.93px;transform:scaleX(0.9688);">Retail</span><span class="c" style="left:1702.40px;transform:scaleX(0.9547);">Active</span></div>
<div class="row" style="top:733px;height:32px"><i class="cb"></i><a class="c" style="left:128.60px;transform:scaleX(0.9958);">Holy Trinity</a><span class="c" style="left:461.31px;transform:scaleX(0.9923);">HolyTrinity</span><span class="c" style="left:1133.00px;transform:scaleX(0.9605);">Corporate</span><span class="c" style="left:1300.90px;transform:scaleX(1.0065);">Competition</span><span class="c" style="left:1701.90px;transform:scaleX(0.9776);">not-Approved</span></div>
<div class="row g" style="top:765px;height:32px"><i class="cb"></i><a class="c" style="left:129.13px;transform:scaleX(0.9723);">IndigoStrawberry, Co.</a><span class="c" style="left:461.83px;transform:scaleX(0.9696);">IndigoStrawberryCo</span><span class="phw"><svg class="ph" viewBox="0 0 26 26" width="26" height="26"><path d="M9.300 5.700 L13.100 9.600 L10.700 12 L14.500 16 L16.700 13.300 L20.400 17.100 L16.400 20.700 H13.600 L6.200 13.600 Q4.700 11.500 5.900 9.700Z" fill="none" stroke="#111" stroke-width="1.850" stroke-linejoin="round"/></svg></span><b class="rd" style="left:1028.0px;width:94.0px;top:9.4px;height:14.2px"></b><span class="c" style="left:1133.00px;transform:scaleX(0.9605);">Corporate</span><span class="c" style="left:1300.90px;transform:scaleX(0.9718);">Customer</span><span class="c" style="left:1499.93px;transform:scaleX(0.9688);">Retail</span><span class="c" style="left:1702.40px;transform:scaleX(0.9547);">Active</span></div>
<div class="row" style="top:797px;height:33px"><i class="cb"></i><a class="c" style="left:129.12px;transform:scaleX(0.9813);">InteractiveGoldfish, Inc.</a><span class="c" style="left:461.82px;transform:scaleX(0.9841);">InteractiveGoldfishInc</span><span class="phw"><svg class="ph" viewBox="0 0 26 26" width="26" height="26"><path d="M9.300 5.700 L13.100 9.600 L10.700 12 L14.500 16 L16.700 13.300 L20.400 17.100 L16.400 20.700 H13.600 L6.200 13.600 Q4.700 11.500 5.900 9.700Z" fill="none" stroke="#111" stroke-width="1.850" stroke-linejoin="round"/></svg></span><span class="c" style="left:1030.3px;margin-top:-11px;transform:scaleX(.97)">(</span><b class="rd" style="left:1032.7px;width:97.0px;top:7.2px;height:19.8px"></b><span class="c" style="left:1133.00px;transform:scaleX(0.9605);">Corporate</span><span class="c" style="left:1300.90px;transform:scaleX(0.9718);">Customer</span><span class="c" style="left:1499.93px;transform:scaleX(0.9688);">Retail</span><span class="c" style="left:1702.40px;transform:scaleX(0.9547);">Active</span></div>
<div class="row g" style="top:830px;height:33px"><i class="cb"></i><a class="c" style="left:128.65px;transform:scaleX(0.9461);">Key Pool, Co.</a><span class="c" style="left:461.35px;transform:scaleX(0.9487);">KeyPoolCo</span><span class="phw"><svg class="ph" viewBox="0 0 26 26" width="26" height="26"><path d="M9.300 5.700 L13.100 9.600 L10.700 12 L14.500 16 L16.700 13.300 L20.400 17.100 L16.400 20.700 H13.600 L6.200 13.600 Q4.700 11.500 5.900 9.700Z" fill="none" stroke="#111" stroke-width="1.850" stroke-linejoin="round"/></svg></span><b class="rd" style="left:1028.0px;width:95.0px;top:7.0px;height:17.3px"></b><span class="c" style="left:1133.00px;transform:scaleX(0.9605);">Corporate</span><span class="c" style="left:1300.90px;transform:scaleX(0.9718);">Customer</span><span class="c" style="left:1499.93px;transform:scaleX(0.9688);">Retail</span><span class="c" style="left:1702.40px;transform:scaleX(0.9547);">Active</span></div>
<div class="row" style="top:863px;height:33px"><i class="cb"></i><a class="c" style="left:128.63px;transform:scaleX(0.9695);">MagicRooster, L.L.C.</a><span class="c" style="left:461.33px;transform:scaleX(0.9708);">MagicRoosterLLC</span><span class="phw"><svg class="ph" viewBox="0 0 26 26" width="26" height="26"><path d="M9.300 5.700 L13.100 9.600 L10.700 12 L14.500 16 L16.700 13.300 L20.400 17.100 L16.400 20.700 H13.600 L6.200 13.600 Q4.700 11.500 5.900 9.700Z" fill="none" stroke="#111" stroke-width="1.850" stroke-linejoin="round"/></svg></span><span class="c" style="left:1030.3px;margin-top:-11px;transform:scaleX(.97)">(</span><b class="rd" style="left:1032.7px;width:97.0px;top:6.5px;height:19.5px"></b><span class="c" style="left:1133.00px;transform:scaleX(0.9605);">Corporate</span><span class="c" style="left:1300.90px;transform:scaleX(0.9718);">Customer</span><span class="c" style="left:1499.93px;transform:scaleX(0.9688);">Retail</span><span class="c" style="left:1702.40px;transform:scaleX(0.9547);">Active</span></div>
<div class="row g" style="top:896px;height:33px"><i class="cb"></i><a class="c" style="left:128.55px;transform:scaleX(1.0537);">Microsoft</a><span class="c" style="left:461.27px;transform:scaleX(1.0341);">Microsoft</span><span class="phw"><svg class="ph" viewBox="0 0 26 26" width="26" height="26"><path d="M9.300 5.700 L13.100 9.600 L10.700 12 L14.500 16 L16.700 13.300 L20.400 17.100 L16.400 20.700 H13.600 L6.200 13.600 Q4.700 11.500 5.900 9.700Z" fill="none" stroke="#111" stroke-width="1.850" stroke-linejoin="round"/></svg></span><span class="c" style="left:1030.3px;margin-top:-11px;transform:scaleX(.97)">(</span><b class="rd" style="left:1035.4px;width:90.4px;top:7.0px;height:17.3px"></b><span class="c" style="left:1133.00px;transform:scaleX(0.9605);">Corporate</span><span class="c" style="left:1300.70px;transform:scaleX(0.9707);">Vendor</span><span class="c" style="left:1702.40px;transform:scaleX(0.9547);">Active</span></div>
</div>

<div class="ab" style="left:110px;top:240px;width:1789px;height:1px;background:#f4f4f4"></div><div class="ab" style="left:1899px;top:240px;width:13px;height:682px;background:#f1f1f1"></div><div class="ab" style="left:1901px;top:262px;width:11px;height:416px;background:#c1c1c1"></div><svg class="ab" style="left:1899px;top:240px" width="13" height="22" viewBox="0 0 13 22"><path d="M5.700 14.800 L10.300 9.700 L14.900 14.800Z" fill="#a3a0a6"/></svg><svg class="ab" style="left:1899px;top:900px" width="13" height="22" viewBox="0 0 13 22"><path d="M5.700 9.100 L10.300 14.300 L14.900 9.100Z" fill="#4f4a55"/></svg><div class="ab" style="left:110px;top:922px;width:1802px;height:13px;background:#f1f1f1"></div><div class="ab" style="left:131px;top:925px;width:1171px;height:10px;background:#c1c1c1"></div><svg class="ab" style="left:110px;top:922px" width="21" height="13" viewBox="0 0 21 13"><path d="M12.800 6.900 L7.800 11.500 L12.800 16.100Z" fill="#a3a0a6"/></svg><svg class="ab" style="left:1878px;top:922px" width="21" height="13" viewBox="0 0 21 13"><path d="M8 6.900 L13 11.500 L8 16.100Z" fill="#4f4a55"/></svg><div class="ab" style="left:1899px;top:922px;width:13px;height:13px;background:#dcdcdc"></div>
</body></html>
